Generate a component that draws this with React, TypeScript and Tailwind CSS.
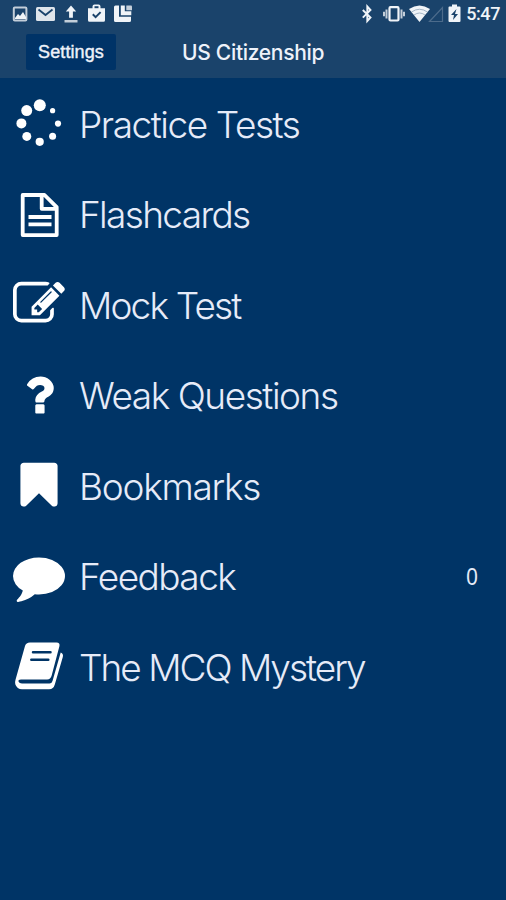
import type { ReactNode } from "react";

function SpinnerIcon() {
  return (
    <svg className="h-[50px] w-[54px]" viewBox="12 98 54 50" fill="currentColor">
      <circle cx="39.8" cy="105.3" r="6" />
      <circle cx="26.7" cy="110.6" r="5.5" />
      <circle cx="21.4" cy="123.4" r="5" />
      <circle cx="26.8" cy="136.4" r="4.5" />
      <circle cx="39.7" cy="141.8" r="4.1" />
      <circle cx="52.6" cy="136.3" r="3.5" />
      <circle cx="58" cy="123.6" r="3.1" />
      <circle cx="52.6" cy="110.7" r="2.6" />
    </svg>
  );
}

function FileIcon() {
  return (
    <svg className="h-[50px] w-[54px]" viewBox="12 188 54 50" fill="none" stroke="currentColor" strokeWidth="3.8" strokeLinejoin="round">
      <path d="M22.7 194h21.8L56.700 206.200v27.900h-34z" />
      <path d="M41.700 194v13.800h15" />
      <path d="M28.500 216h23M28.500 223.400h23" />
    </svg>
  );
}

function PencilIcon() {
  return (
    <svg className="h-[52px] w-[52px]" viewBox="0 0 1792 1792" fill="currentColor">
      <path d="M888 1184l116-116-152-152-116 116v56h96v96h56zm440-720q-16-16-33 1l-350 350q-17 17-1 33t33-1l350-350q17-17 1-33zm80 594v190q0 119-84.500 203.500t-203.500 84.500h-832q-119 0-203.500-84.500t-84.500-203.500v-832q0-119 84.500-203.500t203.500-84.500h832q63 0 117 25 15 7 18 23 3 17-9 29l-49 49q-14 14-32 8-23-6-45-6h-832q-66 0-113 47t-47 113v832q0 66 47 113t113 47h832q66 0 113-47t47-113v-126q0-13 9-22l64-64q15-15 35-7t20 29zm-96-738l288 288-672 672h-288v-288zm444 132l-92 92-288-288 92-92q28-28 68-28t68 28l152 152q28 28 28 68t-28 68z" />
    </svg>
  );
}

function QuestionIcon() {
  return (
    <svg className="h-[52px] w-[52px]" viewBox="0 0 1792 1792" fill="currentColor">
      <path d="M1088 1256v240q0 16-12 28t-28 12h-240q-16 0-28-12t-12-28v-240q0-16 12-28t28-12h240q16 0 28 12t12 28zm316-600q0 54-15.500 101t-35 76.500-55 59.500-57.500 43.500-61 35.500q-41 23-68.500 65t-27.500 67q0 17-12 32.500t-28 15.500h-240q-15 0-25.500-18.500t-10.500-37.500v-45q0-83 65-156.500t143-108.500q59-27 84-56t25-76q0-42-46.500-74t-107.500-32q-65 0-108 29-35 25-107 115-13 16-31 16-12 0-25-8l-164-125q-13-10-15.500-25t5.500-28q160-266 464-266 80 0 161 31t146 83 106 127.500 41 158.500z" />
    </svg>
  );
}

function BookmarkIcon() {
  return (
    <svg className="h-[52px] w-[52px]" viewBox="0 0 1792 1792" fill="currentColor">
      <path d="M1420 128q23 0 44 9 33 13 52.500 41t19.500 62v1289q0 34-19.500 62t-52.500 41q-19 8-44 8-48 0-83-32l-441-424-441 424q-36 33-83 33-23 0-44-9-33-13-52.500-41t-19.500-62v-1289q0-34 19.500-62t52.500-41q21-9 44-9h1048z" />
    </svg>
  );
}

function CommentIcon() {
  return (
    <svg className="h-[52px] w-[52px]" viewBox="0 0 1792 1792" fill="currentColor">
      <path d="M1792 896q0 174-120 321.500t-326 233-450 85.500q-70 0-145-8-198 175-460 242-49 14-114 22-17 2-30.500-9t-17.500-29v-1q-3-4-.5-12t2-10 4.500-9.500l6-9 7-8.500 8-9q7-8 31-34.500t34.500-38 31-39.500 32.500-51 27-59 26-76q-157-89-247.500-220t-90.500-281q0-130 71-248.500t191-204.500 286-136.500 348-50.500q244 0 450 85.500t326 233 120 321.500z" />
    </svg>
  );
}

function BookIcon() {
  return (
    <svg className="h-[54px] w-[54px]" viewBox="12 640 54 54" fill="none">
      <path
        fill="currentColor"
        d="M30 643.500h26.500q3.800 0 2.900 3.800l-7.800 29.500q-1 3.700-4.500 3.700H21q-3 0-2.500 2 .8 2 3.500 2h27.500q2.200 0 3-2.500l8.200-28.500q3 1 2.100 4.500l-8 27.500q-1.300 4.700-5.700 4.700H22q-5 0-6.700-5-.6-2 .2-4.500L25 647q1-3.500 5-3.500z"
      />
      <path stroke="#003466" strokeWidth="2.500" strokeLinecap="round" d="M33 653.300h17.500M31.300 660.800h17" />
    </svg>
  );
}

function StatusBar() {
  return (
    <div className="flex h-[28px] items-center justify-between pr-[6px] pl-[12px] text-[#f0f4f8]">
      <div className="flex items-center gap-[8px]">
        <svg className="h-[20px] w-4" viewBox="0 0 16 20" fill="none">
          <rect x="1.800" y="3.500" width="12.600" height="13" rx="1" stroke="#c3ced9" strokeWidth="2" />
          <path fill="currentColor" d="M3 14l3-4 2 2 3-4 3 5v2H3z" />
        </svg>
        <svg className="h-[20px] w-[19px]" viewBox="0 0 19 20" fill="none">
          <rect x="0" y="3" width="19" height="14" rx="1.500" fill="#dfe5eb" />
          <path stroke="#1a436b" strokeWidth="1.800" d="M2.500 5.500l7 5.500 7-5.500" />
        </svg>
        <svg className="h-[20px] w-4" viewBox="0 0 16 20" fill="currentColor">
          <path d="M8 1.500L2.800 7.500h3.300v6.300h3.800V7.500h3.300z" />
          <path fill="#c3ced9" d="M1.500 16h13v2.500h-13z" />
        </svg>
        <svg className="h-[20px] w-[19px]" viewBox="0 0 19 20" fill="none">
          <path fill="currentColor" d="M1 4.200h4.500V2.500q0-2 2-2h4q2 0 2 2v1.700H18v12q0 1.500-1.500 1.500h-14Q1 17.700 1 16.200z" />
          <path fill="#1a436b" d="M7.500 2.200h4v2h-4z" />
          <path stroke="#1a436b" strokeWidth="2" d="M5.800 10.300l2.800 2.800 5-5" />
        </svg>
        <svg className="h-[20px] w-[19px]" viewBox="0 0 19 20" fill="currentColor">
          <path d="M0 3q0-1.500 1.500-1.500H5v11.300h12v3.700q0 1.500-1.500 1.500h-14Q0 18 0 16.500z" />
          <path d="M6.800 1.500h4v5.800h6.500v4H6.800z" />
          <path fill="#c3ced9" d="M12.300 1.500H17q1 0 1 1v3.700h-5.700z" />
        </svg>
      </div>
      <div className="flex items-center">
        <svg className="h-[20px] w-[12px]" viewBox="0 0 12 20" fill="none" stroke="currentColor" strokeWidth="1.900">
          <path d="M1.800 6l7.700 7.500L6.300 17V2.500L9.500 6l-7.700 7.700" />
        </svg>
        <svg className="ml-[10px] h-[20px] w-[22px]" viewBox="0 0 22 20" fill="none" stroke="currentColor">
          <rect x="6.500" y="3.200" width="9" height="13.300" rx="1" strokeWidth="2.200" />
          <path stroke="#c3ced9" strokeWidth="2" d="M3.500 5.500v9M18.500 5.500v9M1 7.800v4.500M21 7.800v4.500" />
        </svg>
        <svg className="ml-[4px] h-[20px] w-[21px]" viewBox="0 0 21 20" fill="none">
          <path fill="currentColor" d="M0 5Q10.500-2 21 5L10.500 18z" />
          <path stroke="#8fa5ba" strokeWidth=".8" d="M2.500 8q8-5.500 16 0M5 11q5.500-4 11 0" />
        </svg>
        <svg className="-ml-[2px] h-[20px] w-[16px]" viewBox="0 0 16 20" fill="none">
          <path stroke="#4c6b8b" strokeWidth="1.200" d="M1.500 17.500h13V3.500z" />
        </svg>
        <svg className="ml-[4px] h-[20px] w-[13px]" viewBox="0 0 13 20" fill="none">
          <path fill="currentColor" d="M4 .5h5v2h2.500q1 0 1 1V17q0 1-1 1h-10q-1 0-1-1V3.500q0-1 1-1H4z" />
          <path fill="#1a436b" d="M8.500 5L3 11h3L5 16l5-6H7z" />
        </svg>
        <span className="ml-[5px] font-['Roboto',sans-serif] text-[18px] leading-[28px] font-medium tracking-[-0.4px]">5:47</span>
      </div>
    </div>
  );
}

function Header() {
  return (
    <header className="flex h-[50px] items-start pt-[6px] pl-[26px] text-[#eef2fa]">
      <button className="h-[36px] w-[90px] rounded-[2px] bg-[#003367] font-['Liberation_Sans',sans-serif] text-[18px] leading-[36px] tracking-[0.1px] [-webkit-text-stroke:0.4px]">
        Settings
      </button>
      <h1 className="ml-[66px] font-['Inter',sans-serif] text-[21px] leading-[37px] font-medium tracking-[-0.3px] whitespace-nowrap">
        US Citizenship
      </h1>
    </header>
  );
}

type MenuItemProps = {
  icon: ReactNode;
  label: string;
  tracking: string;
  count?: number;
};

function MenuItem({ icon, label, tracking, count }: MenuItemProps) {
  return (
    <li className="flex h-[90.500px] items-center pr-[28px] pl-[12px]">
      <span className="flex w-[54px] shrink-0 justify-center text-white">{icon}</span>
      <span className={`ml-[13px] grow pt-[3px] font-['Inter',sans-serif] text-[37px] leading-[44px] font-light whitespace-nowrap text-[#e6ebf8] ${tracking}`}>
        {label}
      </span>
      {count !== undefined && (
        <span className="origin-right scale-x-90 pt-[3px] font-['Liberation_Sans',sans-serif] text-[23px] text-[#e6ebf8]">{count}</span>
      )}
    </li>
  );
}

export default function App() {
  return (
    <div className="h-[900px] w-[506px] overflow-hidden bg-[#003466]">
      <div className="bg-[#1a436b]">
        <StatusBar />
        <Header />
      </div>
      <ul>
        <MenuItem icon={<SpinnerIcon />} label="Practice Tests" tracking="tracking-[-1.45px]" />
        <MenuItem icon={<FileIcon />} label="Flashcards" tracking="tracking-[-1.65px]" />
        <MenuItem icon={<PencilIcon />} label="Mock Test" tracking="tracking-[-1.85px]" />
        <MenuItem icon={<QuestionIcon />} label="Weak Questions" tracking="tracking-[-1.45px]" />
        <MenuItem icon={<BookmarkIcon />} label="Bookmarks" tracking="tracking-[-1.25px]" />
        <MenuItem icon={<CommentIcon />} label="Feedback" tracking="tracking-[-1.55px]" count={0} />
        <MenuItem icon={<BookIcon />} label="The MCQ Mystery" tracking="tracking-[-2px]" />
      </ul>
    </div>
  );
}
